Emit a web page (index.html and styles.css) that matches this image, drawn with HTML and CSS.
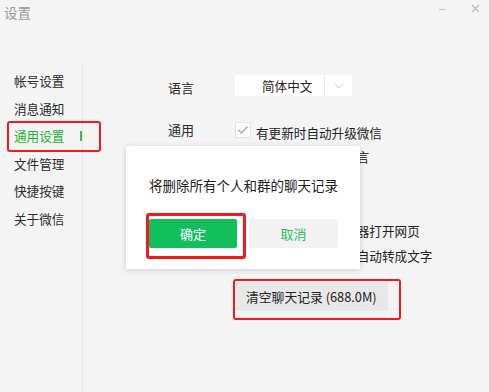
FILE: index.html
```html
<!DOCTYPE html>
<html lang="zh-CN">
<head>
<meta charset="utf-8">
<title>设置</title>
<link rel="stylesheet" href="styles.css">
</head>
<body>
<div class="window">
  <header class="titlebar">
    <span class="title">设置</span>
    <div class="controls">
      <span class="ctl-min"></span>
      <svg class="ctl-close" width="9" height="9" viewBox="0 0 9 9"><path d="M1 1L8 8M8 1L1 8" stroke="#b8b8b8" stroke-width="1.2" fill="none"/></svg>
    </div>
  </header>
  <div class="main">
    <nav class="sidebar">
      <div class="nav-item">帐号设置</div>
      <div class="nav-item">消息通知</div>
      <div class="nav-item active">通用设置</div>
      <div class="nav-item">文件管理</div>
      <div class="nav-item">快捷按键</div>
      <div class="nav-item">关于微信</div>
    </nav>
    <section class="content">
      <div class="row lang-row">
        <div class="label">语言</div>
        <div class="select">
          <span class="select-text">简体中文</span>
          <span class="select-arrow"><svg width="10" height="6" viewBox="0 0 10 6"><path d="M1 1L5 5L9 1" stroke="#cfcfcf" stroke-width="1" fill="none"/></svg></span>
        </div>
      </div>
      <div class="row general-row">
        <div class="label label-general">通用</div>
        <div class="checks">
          <div class="check-row"><span class="checkbox"><svg width="12" height="10" viewBox="0 0 12 10"><path d="M1.5 5L4.5 8L10.5 1.5" stroke="#72cc86" stroke-width="1.4" fill="none"/></svg></span><span class="check-text">有更新时自动升级微信</span></div>
          <div class="check-row"><span class="checkbox"></span><span class="check-text">翻译成系统默认语言</span></div>
          <div class="check-row"><span class="checkbox"></span></div>
          <div class="check-row"><span class="checkbox"></span></div>
          <div class="check-row"><span class="checkbox"></span><span class="check-text">使用系统默认浏览器打开网页</span></div>
          <div class="check-row"><span class="checkbox"></span><span class="check-text">聊天中的语音消息自动转成文字</span></div>
        </div>
      </div>
      <div class="clear-row">
        <button class="clear-btn">清空聊天记录 (688.0M)</button>
      </div>
    </section>
  </div>
  <div class="dialog">
    <p class="dialog-text">将删除所有个人和群的聊天记录</p>
    <div class="dialog-actions">
      <button class="btn btn-ok">确定</button>
      <button class="btn btn-cancel">取消</button>
    </div>
  </div>
</div>
</body>
</html>
```
FILE: styles.css
```css
* { box-sizing: border-box; }
html, body { margin: 0; padding: 0; }
body {
  background: #f4f4f4;
  font-family: "Noto Sans CJK SC", "Noto Sans", sans-serif;
  color: #333;
}
.window {
  position: relative;
  width: 489px;
  height: 392px;
  overflow: hidden;
  background: #f4f4f4;
}
.titlebar {
  height: 26px;
  display: flex;
  align-items: flex-start;
  justify-content: space-between;
}
.title {
  font-size: 13.5px;
  line-height: 24px;
  color: #9a9a9a;
  padding-left: 4px;
}
.controls {
  display: flex;
  align-items: center;
  gap: 25px;
  padding: 4px 9px 0 0;
}
.ctl-min {
  width: 7px;
  height: 1px;
  background: #c4c4c4;
  margin-top: 1px;
}
.ctl-close { display: block; }

.main {
  display: flex;
  height: 366px;
}
.sidebar {
  width: 83px;
  margin-top: 36px;
  padding-top: 5px;
  border-right: 1px solid #e6e6e6;
}
.nav-item {
  position: relative;
  padding-left: 14px;
  font-size: 12.6px;
  line-height: 27.6px;
  height: 27.6px;
  color: #2b2b2b;
  white-space: nowrap;
}
.nav-item.active { color: #22b133; }
.nav-item.active::before {
  content: "";
  position: absolute;
  left: 80px;
  top: 9px;
  width: 2px;
  height: 10px;
  background: #3cbe4a;
}
.nav-item.active::after {
  content: "";
  position: absolute;
  left: 7px;
  top: -1px;
  width: 90px;
  height: 27px;
  border: 2.5px solid #f21b1b;
  border-radius: 3px;
}

.content {
  flex: 1;
  padding: 49px 0 0 85px;
}
.row { display: flex; }
.label {
  width: 67px;
  font-size: 13px;
  color: #2b2b2b;
}
.lang-row .label {
  line-height: 21px;
  padding-top: 2px;
}
.select {
  display: flex;
  width: 117px;
  height: 21px;
  background: #fff;
}
.select-text {
  width: 90px;
  padding-left: 27px;
  font-size: 12.6px;
  line-height: 21px;
  color: #222;
  border-right: 1px solid #ececec;
}
.select-arrow {
  flex: 1;
  display: flex;
  align-items: center;
  justify-content: center;
}
.general-row { margin-top: 22.7px; }
.label-general { line-height: 17px; }
.check-row {
  display: flex;
  align-items: flex-start;
  height: 24.6px;
}
.checkbox {
  width: 16px;
  height: 16px;
  margin-top: 1.3px;
  margin-right: 5px;
  background: #fff;
  border: 1px solid #e4e4e4;
  display: flex;
  align-items: center;
  justify-content: center;
}
.check-text {
  font-size: 12.6px;
  line-height: 24.6px;
  color: #222;
  white-space: nowrap;
}
.clear-row {
  margin-top: 13.7px;
  padding-left: 68px;
}
.clear-btn {
  position: relative;
  width: 152px;
  height: 29px;
  border: 0;
  background: #e8e8e8;
  font-family: inherit;
  font-size: 12.8px;
  color: #222;
  text-align: left;
  padding: 0 0 0 10px;
  border-radius: 1px;
}
.clear-btn::after {
  content: "";
  position: absolute;
  left: -3px;
  top: -3px;
  width: 164px;
  height: 37px;
  border: 2.5px solid #f21b1b;
  border-radius: 3px;
}

.dialog {
  position: absolute;
  left: 126px;
  top: 146px;
  width: 234px;
  height: 123px;
  background: #fff;
  box-shadow: 0 1px 6px rgba(0, 0, 0, 0.16);
  padding: 0 0 0 23px;
}
.dialog-text {
  margin: 30px 0 0;
  font-size: 13.5px;
  line-height: 18px;
  color: #222;
  white-space: nowrap;
}
.dialog-actions {
  display: flex;
  gap: 12px;
  margin-top: 25px;
}
.btn {
  height: 29px;
  border: 0;
  border-radius: 2px;
  font-family: inherit;
  font-size: 13px;
  padding: 0;
}
.btn-ok {
  position: relative;
  width: 88px;
  background: #12bf5c;
  color: #fff;
}
.btn-ok::after {
  content: "";
  position: absolute;
  left: -3px;
  top: -6px;
  width: 94px;
  height: 40px;
  border: 3px solid #f21b1b;
  border-radius: 3px;
}
.btn-cancel {
  width: 89px;
  background: #f2f2f2;
  color: #2bbc5c;
}
```
